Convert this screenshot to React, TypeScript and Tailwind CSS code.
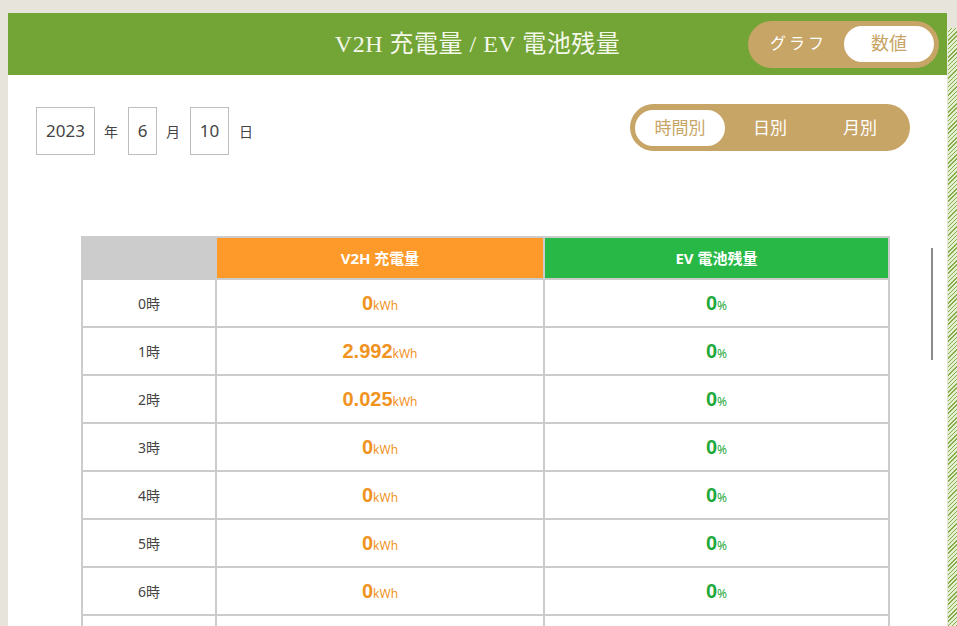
import React from "react";

const rows = [
  { hour: "0時", v2h: "0", ev: "0" },
  { hour: "1時", v2h: "2.992", ev: "0" },
  { hour: "2時", v2h: "0.025", ev: "0" },
  { hour: "3時", v2h: "0", ev: "0" },
  { hour: "4時", v2h: "0", ev: "0" },
  { hour: "5時", v2h: "0", ev: "0" },
  { hour: "6時", v2h: "0", ev: "0" },
];

const sans = "font-['Noto_Sans','Noto_Sans_CJK_JP',sans-serif]";
const serif = "font-['Liberation_Serif','Noto_Sans_CJK_JP',serif]";

function DateBox({ value, w }: { value: string; w: string }) {
  return (
    <div
      className={`${w} h-[48px] border border-[#bdbdbd] flex items-center justify-center text-[17px] text-[#444]`}
    >
      {value}
    </div>
  );
}

export default function App() {
  return (
    <div className={`h-[626px] w-[957px] overflow-hidden bg-[#e7e4dc] flex ${sans}`}>
      <div className="ml-[8px] mt-[13px] w-[939px] bg-white relative">
        {/* header */}
        <header className="h-[62px] bg-[#72a536] grid grid-cols-[1fr_auto_1fr] items-center">
          <div />
          <h1 className={`${serif} text-[24px] text-[#f4f8ea] tracking-[0.5px]`}>
            V2H 充電量 / EV 電池残量
          </h1>
          <div className="flex justify-end pr-[8px]">
            <div className="w-[191px] h-[47px] rounded-full bg-[#c7a566] p-[5px] flex items-center">
              <span className={`${serif} flex-1 text-center text-[16px] text-white tracking-[3px]`}>
                グラフ
              </span>
              <span
                className={`${serif} w-[90px] h-[36px] rounded-full bg-white flex items-center justify-center text-[18px] text-[#c7a566]`}
              >
                数値
              </span>
            </div>
          </div>
        </header>

        {/* controls */}
        <div className="flex justify-between items-start pl-[28px] pr-[37px] pt-[29px]">
          <div className="flex items-center gap-[10px] mt-[3px] text-[14px] text-[#444]">
            <DateBox value="2023" w="w-[59px]" />
            <span className="-ml-px">年</span>
            <DateBox value="6" w="w-[29px]" />
            <span className="-ml-px">月</span>
            <DateBox value="10" w="w-[39px]" />
            <span>日</span>
          </div>
          <div className="w-[280px] h-[47px] rounded-full bg-[#c7a566] p-[5px] flex items-center text-[17px]">
            <span className="w-[90px] h-[36px] rounded-full bg-white flex items-center justify-center text-[#c7a566]">
              時間別
            </span>
            <span className="w-[90px] text-center text-white">日別</span>
            <span className="w-[90px] text-center text-white">月別</span>
          </div>
        </div>

        {/* table */}
        <table className="ml-[73px] mt-[81px] w-[809px] border-collapse text-[14px]">
          <thead>
            <tr className="h-[42px] text-white font-bold text-[15px]">
              <th className="w-[134px] bg-[#cccccc] border-2 border-[#cccccc]" />
              <th className="w-[328px] bg-[#fd9a29] border-2 border-[#cccccc]">V2H 充電量</th>
              <th className="bg-[#27b846] border-2 border-[#cccccc]">EV 電池残量</th>
            </tr>
          </thead>
          <tbody>
            {rows.map((r) => (
              <tr key={r.hour} className="h-[48px]">
                <td className="border-2 border-[#cccccc] text-center text-[#444]">{r.hour}</td>
                <td className="border-2 border-[#cccccc] text-center text-[#f0931f]">
                  <span className="font-['Liberation_Sans',sans-serif] font-bold text-[20px]">{r.v2h}</span>
                  <span className="text-[12px]">kWh</span>
                </td>
                <td className="border-2 border-[#cccccc] text-center text-[#1fa93b]">
                  <span className="font-['Liberation_Sans',sans-serif] font-bold text-[20px]">{r.ev}</span>
                  <span className="text-[12px]">%</span>
                </td>
              </tr>
            ))}
            <tr className="h-[48px]">
              <td className="border-2 border-[#cccccc]" />
              <td className="border-2 border-[#cccccc]" />
              <td className="border-2 border-[#cccccc]" />
            </tr>
          </tbody>
        </table>

        {/* scroll indicator */}
        <div className="absolute right-[14px] top-[235px] w-[2px] h-[112px] bg-[#8a8a8a]" />
      </div>
      <div className="ml-[1px] mt-[28px] w-[9px] bg-[repeating-linear-gradient(-45deg,#86ad4a_0_1px,#e4efd2_1px_3px)]" />
    </div>
  );
}
